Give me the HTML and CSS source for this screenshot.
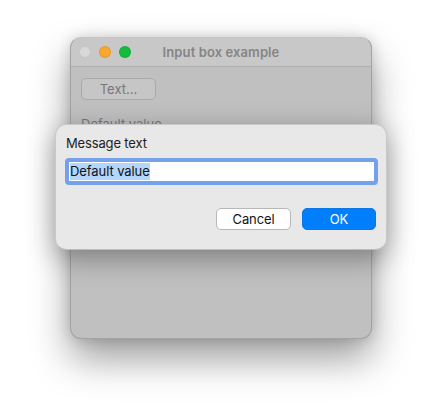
FILE: index.html
```html
<!DOCTYPE html>
<html lang="en">
<head>
    <meta charset="UTF-8">
    <meta name="viewport" content="width=device-width, initial-scale=1.0">
    <title>Input box example</title>
    <link rel="stylesheet" href="styles.css">
</head>
<body>
    <div class="window">
        <div class="titlebar">
            <div class="lights">
                <span class="light light-close"></span>
                <span class="light light-min"></span>
                <span class="light light-max"></span>
            </div>
            <div class="title">Input box example</div>
        </div>
        <div class="window-body">
            <button class="text-button" type="button">Text...</button>
            <div class="value-label">Default value</div>
        </div>
    </div>

    <div class="dialog">
        <div class="message">Message text</div>
        <div class="field"><span class="selected">Default value</span></div>
        <div class="actions">
            <button class="btn btn-cancel" type="button">Cancel</button>
            <button class="btn btn-ok" type="button">OK</button>
        </div>
    </div>
</body>
</html>
```

FILE: styles.css
```css
html, body {
    margin: 0;
    padding: 0;
}
body {
    width: 442px;
    height: 412px;
    overflow: hidden;
    position: relative;
    background-color: #ffffff;
    font-family: Inter, "Liberation Sans", sans-serif;
    font-size: 13px;
    color: #222222;
}
.window {
    box-sizing: border-box;
    width: 302px;
    height: 302px;
    margin: 37px 0 0 70px;
    position: absolute;
    background-color: #c0c0c0;
    border: 1px solid #a3a3a3;
    border-top-color: #c4c4c4;
    border-radius: 11px;
    box-shadow: 0 20px 38px rgba(0, 0, 0, 0.38), 0 0 14px rgba(0, 0, 0, 0.16);
}
.titlebar {
    height: 28px;
    position: relative;
    display: flex;
    align-items: center;
    justify-content: center;
    background-color: #c8c8c8;
    border-bottom: 1px solid #b0b0b0;
    border-radius: 10px 10px 0 0;
}
.lights {
    position: absolute;
    left: 8px;
    top: 8px;
    display: flex;
    gap: 8px;
}
.light {
    box-sizing: border-box;
    width: 12px;
    height: 12px;
    border-radius: 50%;
    border: 1px solid rgba(0, 0, 0, 0.08);
}
.light-close { background-color: #d8d8d8; }
.light-min { background-color: #f8a72f; }
.light-max { background-color: #12bd3c; }
.title {
    font-weight: 600;
    letter-spacing: 0.1px;
    color: #858585;
}
.window-body {
    padding: 11px 10px;
}
.text-button {
    display: block;
    box-sizing: border-box;
    width: 75px;
    height: 22px;
    padding: 0;
    background-color: #c6c6c6;
    border: 1px solid #a9a9a9;
    border-radius: 5px;
    font: inherit;
    color: #777777;
}
.value-label {
    margin-top: 16px;
    color: #7a7a7a;
}
.dialog {
    box-sizing: border-box;
    position: absolute;
    left: 55px;
    top: 124px;
    width: 332px;
    height: 126px;
    padding: 11px 10px 0 10px;
    background-color: #e8e8e8;
    border: 1px solid #c9c9c9;
    border-bottom-color: #bdbdbd;
    border-radius: 11px;
    box-shadow: 0 8px 28px rgba(0, 0, 0, 0.36);
}
.message {
    line-height: 14px;
    height: 14px;
    margin-bottom: 8px;
    letter-spacing: -0.15px;
}
.field {
    box-sizing: border-box;
    height: 27px;
    margin-right: -2px;
    margin-left: -1px;
    padding-left: 1px;
    display: flex;
    align-items: center;
    background-color: #ffffff;
    border: 4px solid #73a2ea;
    border-radius: 4px;
    color: #111111;
    letter-spacing: -0.08px;
}
.selected {
    background-color: #b3d6fd;
    line-height: 17px;
}
.actions {
    display: flex;
    justify-content: flex-end;
    gap: 11px;
    margin-top: 23px;
}
.btn {
    box-sizing: border-box;
    width: 75px;
    height: 22px;
    padding: 0 0 1px;
    border-radius: 5px;
    font: inherit;
    letter-spacing: -0.1px;
}
.btn-cancel {
    background-color: #ffffff;
    border: 1px solid #b8b8b8;
    color: #111111;
}
.btn-ok {
    width: 74px;
    background-color: #007efb;
    border: 1px solid #0a78e6;
    color: #ffffff;
}
```
